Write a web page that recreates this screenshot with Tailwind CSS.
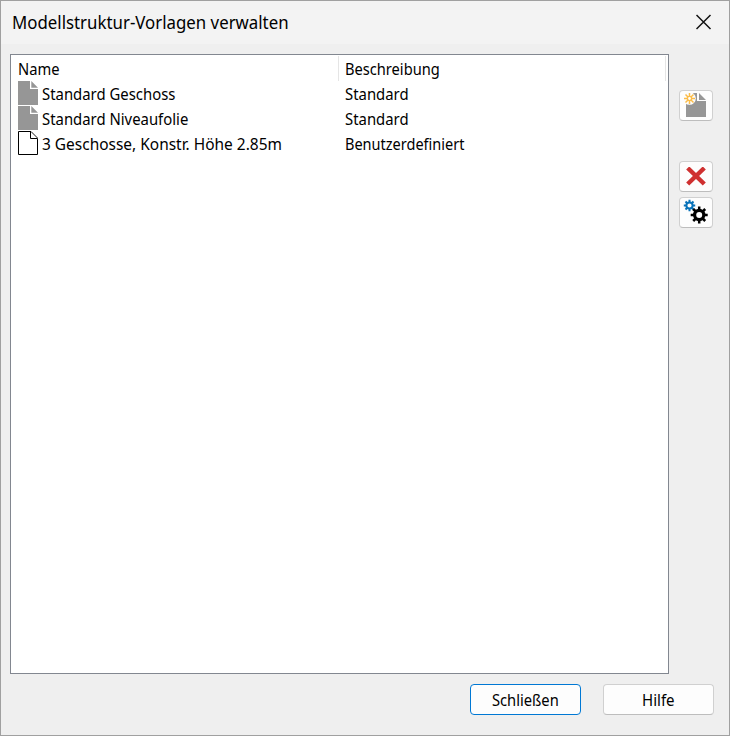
<!DOCTYPE html>
<html lang="de">
<head>
<meta charset="utf-8">
<title>Modellstruktur-Vorlagen verwalten</title>
<script src="https://cdn.jsdelivr.net/npm/@tailwindcss/browser@4"></script>
</head>
<body class="font-['Noto_Sans',sans-serif] text-black">
<div class="flex h-[736px] w-[730px] flex-col overflow-hidden border border-[#a0a0a0] bg-[#efefef]">
  <header class="flex h-[43px] shrink-0 items-center justify-between bg-[#f3f3f3] pl-[11px] pr-[17px] pb-[2px]">
    <h1 class="text-[18px] leading-6 whitespace-nowrap"><span class="inline-block origin-left scale-x-[.935]">Modellstruktur-Vorlagen verwalten</span></h1>
    <svg class="size-4" viewBox="0 0 16 16" fill="none" stroke="#111" stroke-width="1.5"><path d="M.5 1l14 14M14.5 1L.5 15"/></svg>
  </header>
  <main class="flex pl-[9px] pt-[10px]">
    <div class="h-[620px] w-[659px] border border-[#828790] bg-white pt-px text-[16px] leading-[25px] whitespace-nowrap">
      <div class="flex h-[25px]">
        <div class="w-[328px] border-r border-[#e5e5e5] pl-[7px] pt-px"><span class="inline-block origin-left scale-x-[.92]">Name</span></div>
        <div class="w-[327px] border-r border-[#e5e5e5] pl-[6px] pt-px"><span class="inline-block origin-left scale-x-[.915]">Beschreibung</span></div>
      </div>
      <div class="flex h-[25px]">
        <div class="flex w-[328px] gap-1 pl-[7px]">
          <svg class="h-[25px] w-5" viewBox="0 0 20 25"><path d="M0 0H12V8H20V24H0zM13.3 0L20 6.7H13.3z" fill="#969696"/></svg>
          <span class="inline-block origin-left scale-x-[.93] pt-px">Standard Geschoss</span>
        </div>
        <div class="pl-[6px] pt-px"><span class="inline-block origin-left scale-x-[.93]">Standard</span></div>
      </div>
      <div class="flex h-[25px]">
        <div class="flex w-[328px] gap-1 pl-[7px]">
          <svg class="h-[25px] w-5" viewBox="0 0 20 25"><path d="M0 0H12V8H20V24H0zM13.3 0L20 6.7H13.3z" fill="#969696"/></svg>
          <span class="inline-block origin-left scale-x-[.93] pt-px">Standard Niveaufolie</span>
        </div>
        <div class="pl-[6px] pt-px"><span class="inline-block origin-left scale-x-[.93]">Standard</span></div>
      </div>
      <div class="flex h-[25px]">
        <div class="flex w-[328px] gap-1 pl-[7px]">
          <svg class="h-[25px] w-5" viewBox="0 0 20 25" fill="none" stroke="#000"><path d="M13 .5H.5V23.5H19.5V7.5H12.5V.5"/><path d="M13 .5L19.5 7" stroke-width=".9"/></svg>
          <span class="inline-block origin-left scale-x-[.966] pt-px">3 Geschosse, Konstr. Höhe 2.85m</span>
        </div>
        <div class="pl-[6px] pt-px"><span class="inline-block origin-left scale-x-[.907]">Benutzerdefiniert</span></div>
      </div>
    </div>
    <div class="ml-[10px] flex flex-col pt-[36px]">
      <button class="flex h-[31px] w-[34px] items-center justify-center rounded-[4px] border border-[#d0d0d0] border-b-[#bdbdbd] bg-[#fdfdfd]">
        <svg class="h-[25px] w-6" viewBox="0 0 24 25"><path d="M2 0H13V8H22V24H2zM15 0L22 7H15z" fill="#969696"/><circle cx="5.5" cy="5.5" r="6.3" fill="#fdfdfd"/><path d="M5.5 0V11M0 5.5H11M1.5 1.5l8 8M9.5 1.5l-8 8" stroke="#fbbc48" stroke-width="1.5"/><circle cx="5.5" cy="5.5" r="2.1" fill="#fff" stroke="#fbbc48" stroke-width="1.4"/></svg>
      </button>
      <button class="mt-[40px] flex h-[31px] w-[34px] items-center justify-center rounded-[4px] border border-[#d0d0d0] border-b-[#bdbdbd] bg-[#fdfdfd]">
        <svg class="h-[19px] w-5" viewBox="0 0 20 19"><path d="M1.7 1L18.3 17M18.3 1L1.7 17" stroke="#cf3030" stroke-width="4.4"/></svg>
      </button>
      <button class="mt-[5px] flex h-[31px] w-[34px] items-center justify-center rounded-[4px] border border-[#d0d0d0] border-b-[#bdbdbd] bg-[#fdfdfd]">
        <svg class="h-[25px] w-6 overflow-visible" viewBox="0 0 24 25" fill="none">
          <g stroke="#0872b9"><circle cx="5.5" cy="5.5" r="3.1" stroke-width="2"/><path d="M5.5 -.2V2.2M5.5 8.8V11.2M-.2 5.5H2.2M8.8 5.5H11.2M1.5 1.5L3.2 3.2M7.8 7.8L9.5 9.5M9.5 1.5L7.8 3.2M3.2 7.8L1.5 9.5" stroke-width="2"/></g>
          <g stroke="#000"><circle cx="15.2" cy="15" r="4.6" stroke-width="3.2"/><path d="M15.2 6.5V10M15.2 20V23.5M6.7 15H10.2M20.2 15H23.7M9.2 9L11.7 11.5M18.7 18.5L21.2 21M21.2 9L18.7 11.5M11.7 18.5L9.2 21" stroke-width="2.5"/></g>
        </svg>
      </button>
    </div>
  </main>
  <footer class="flex gap-[22px] pl-[469px] pt-[10px] text-[16px] leading-6">
    <button class="h-[31px] w-[111px] rounded-[4px] border border-[#0078d4] bg-[#fdfdfd]"><span class="inline-block scale-x-[.92]">Schließen</span></button>
    <button class="h-[31px] w-[111px] rounded-[4px] border border-[#d0d0d0] border-b-[#bdbdbd] bg-[#fdfdfd]"><span class="inline-block scale-x-[.94]">Hilfe</span></button>
  </footer>
</div>
</body>
</html>
